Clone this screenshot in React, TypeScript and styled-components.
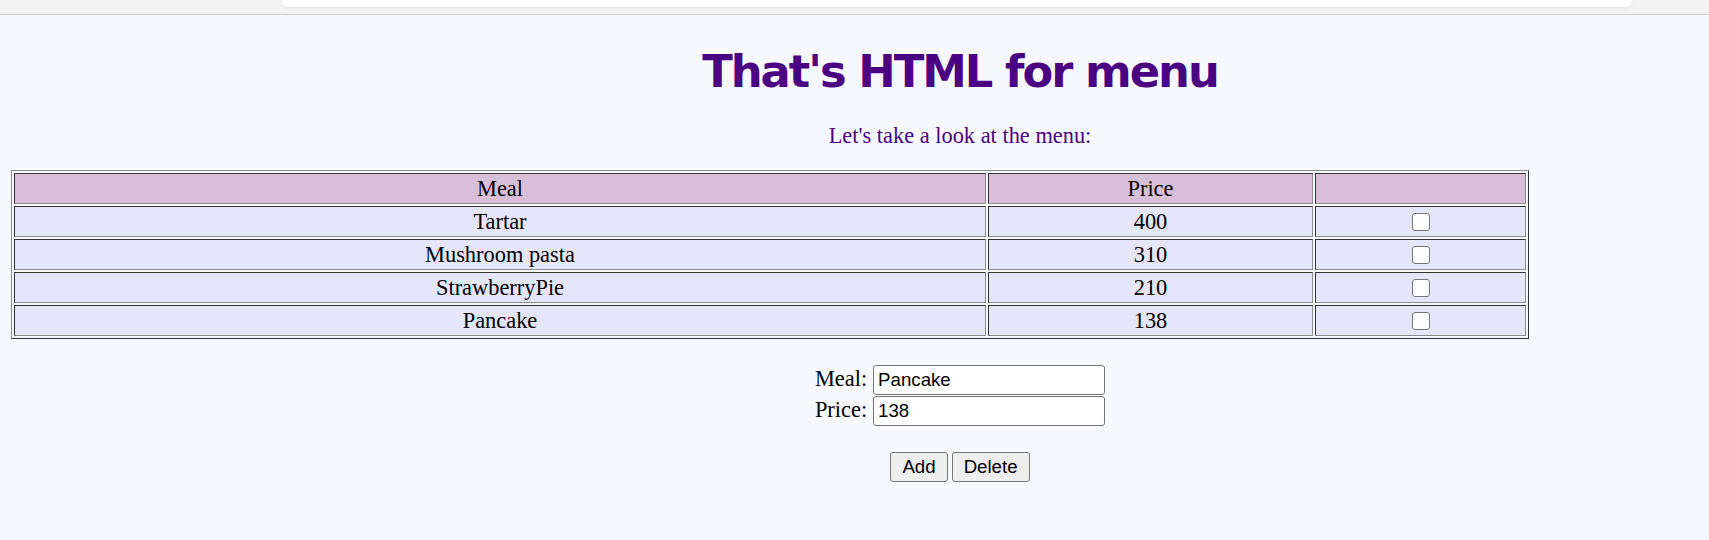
import React from "react";
import styled, { createGlobalStyle } from "styled-components";

const GlobalStyle = createGlobalStyle`
  html, body {
    margin: 0;
    padding: 0;
    background: #f8f8ff;
  }
  body {
    font-family: "Liberation Serif", "Times New Roman", serif;
    font-size: 22.4px;
    color: #000;
  }
`;

const BrowserStrip = styled.div`
  height: 14px;
  background: #f3f3f3;
  border-bottom: 1px solid #cdcdcd;
  padding-left: 282px;
  box-sizing: content-box;
`;

const AddressBox = styled.div`
  width: 1350px;
  height: 7px;
  background: #ffffff;
  border-radius: 0 0 6px 6px;
  box-shadow: 0 1px 3px rgba(0, 0, 0, 0.08);
`;

const Page = styled.main`
  padding: 0 11px;
`;

const Centered = styled.div`
  padding-left: 211px;
  text-align: center;
`;

const Title = styled.h1`
  margin: 31px 0 0;
  font-family: "DejaVu Sans", Verdana, Tahoma, sans-serif;
  font-weight: bold;
  font-size: 44.8px;
  line-height: 52px;
  letter-spacing: -2px;
  color: #4b0082;
`;

const Subtitle = styled.p`
  margin: 25px 0 22px;
  line-height: 25px;
  color: #4b0082;
`;

const MenuTable = styled.table`
  width: 1518px;
  table-layout: fixed;
  border-collapse: separate;
  border-spacing: 2px;
  border: 1px solid;
  border-color: #8c8c8c #333333 #333333 #8c8c8c;
`;

const Cell = styled.td<{ $head?: boolean; $w?: number }>`
  box-sizing: border-box;
  ${(p) => (p.$w ? `width: ${p.$w}px;` : "")}
  background: ${(p) => (p.$head ? "#d8bfd8" : "#e6e6fa")};
  border: 1px solid;
  border-color: #333333 #8c8c8c #8c8c8c #333333;
  padding: 2px;
  text-align: center;
  vertical-align: middle;
  font-weight: normal;
  line-height: 25px;
  font-size: 22.4px;
`;

const CheckWrap = styled.div`
  display: flex;
  justify-content: center;
  align-items: center;
  height: 25px;
`;

const Check = styled.input`
  appearance: none;
  -webkit-appearance: none;
  width: 18px;
  height: 18px;
  margin: 0;
  border: 1px solid #767676;
  border-radius: 3px;
  background: #ffffff;
  box-sizing: border-box;
`;

const Form = styled.div`
  margin-top: 26px;
  display: flex;
  flex-direction: column;
  align-items: center;
  gap: 1px;
`;

const FieldRow = styled.label`
  display: flex;
  align-items: baseline;
  gap: 6px;
  line-height: 25px;
`;

const TextInput = styled.input`
  box-sizing: border-box;
  width: 232px;
  height: 30px;
  padding: 0 4px;
  border: 1px solid #767676;
  border-radius: 3px;
  background: #ffffff;
  color: #000;
  font-family: "Liberation Sans", Arial, sans-serif;
  font-size: 18.67px;
`;

const ButtonRow = styled.div`
  margin-top: 26px;
  display: flex;
  justify-content: center;
  gap: 4px;
`;

const Button = styled.button`
  box-sizing: border-box;
  height: 30px;
  padding: 0 11px;
  border: 1px solid #767676;
  border-radius: 3px;
  background: #efefef;
  color: #000;
  font-family: "Liberation Sans", Arial, sans-serif;
  font-size: 18.67px;
`;

const meals = [
  { name: "Tartar", price: 400 },
  { name: "Mushroom pasta", price: 310 },
  { name: "StrawberryPie", price: 210 },
  { name: "Pancake", price: 138 },
];

export default function App() {
  return (
    <>
      <GlobalStyle />
      <BrowserStrip>
        <AddressBox />
      </BrowserStrip>
      <Page>
        <Centered>
          <Title>That's HTML for menu</Title>
          <Subtitle>Let's take a look at the menu:</Subtitle>
        </Centered>
        <MenuTable>
          <tbody>
            <tr>
              <Cell $head $w={972}>Meal</Cell>
              <Cell $head $w={325}>Price</Cell>
              <Cell $head $w={211}></Cell>
            </tr>
            {meals.map((m) => (
              <tr key={m.name}>
                <Cell>{m.name}</Cell>
                <Cell>{m.price}</Cell>
                <Cell>
                  <CheckWrap>
                    <Check type="checkbox" />
                  </CheckWrap>
                </Cell>
              </tr>
            ))}
          </tbody>
        </MenuTable>
        <Centered>
          <Form>
            <FieldRow>
              Meal: <TextInput defaultValue="Pancake" />
            </FieldRow>
            <FieldRow>
              Price: <TextInput defaultValue="138" />
            </FieldRow>
          </Form>
          <ButtonRow>
            <Button>Add</Button>
            <Button>Delete</Button>
          </ButtonRow>
        </Centered>
      </Page>
    </>
  );
}
